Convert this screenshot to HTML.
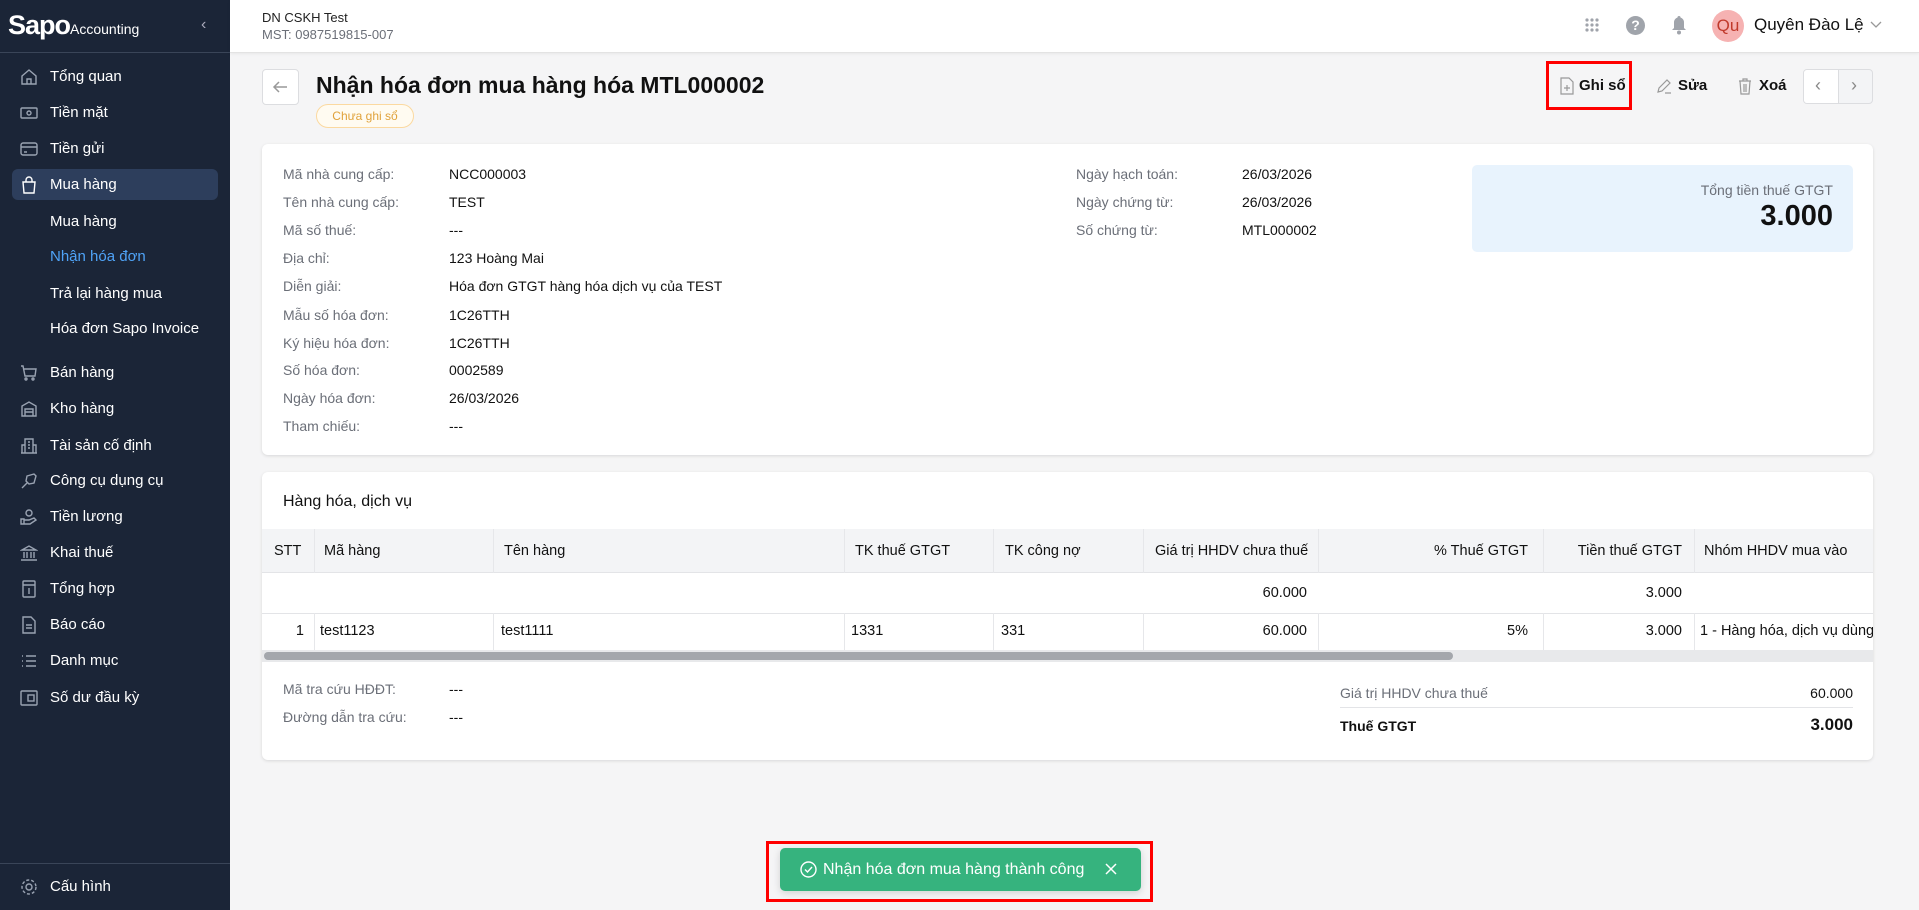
<!DOCTYPE html>
<html><head><meta charset="utf-8">
<style>
*{box-sizing:border-box;margin:0;padding:0}
body{width:1919px;height:910px;overflow:hidden;background:#f5f5f6;font-family:"Liberation Sans","Noto Sans CJK SC",sans-serif;color:#111;position:relative;font-size:14px}
.abs{position:absolute}
#sb{left:0;top:0;width:230px;height:910px;background:#1b2537;color:#fff}
.si{position:absolute;left:50px;font-size:15px;color:#fff;white-space:nowrap}
.ic{position:absolute;left:20px;width:18px;height:18px}
#hdr{left:230px;top:0;width:1689px;height:53px;background:#fff;border-bottom:1px solid #e3e3e3;box-shadow:0 1px 3px rgba(0,0,0,.06)}
.card{background:#fff;border-radius:6px;box-shadow:0 1px 3px rgba(0,0,0,.12)}
.lb{position:absolute;color:#6b6f78;font-size:14px;white-space:nowrap}
.vl{position:absolute;color:#111;font-size:14px;white-space:nowrap}
.th,.td{position:absolute;font-size:14.5px;white-space:nowrap}
.th{font-weight:normal;color:#111}
.vline{position:absolute;width:1px;background:#e6e7ea}
</style></head><body>
<div id="sb" class="abs">
  <div class="abs" style="left:8px;top:10px;font-size:27px;font-weight:700;letter-spacing:-1px;color:#fff">Sapo<span style="font-size:14px;font-weight:400;letter-spacing:0">Accounting</span></div>
  <div class="abs" style="left:201px;top:16px;color:#aab;font-size:16px">‹</div>
  <div class="abs" style="left:0;top:52px;width:230px;height:1px;background:#3a4558"></div>
  <div class="abs" style="left:12px;top:169px;width:206px;height:31px;border-radius:6px;background:#2d3e5c"></div>
  <svg class="ic" style="top:68px" viewBox="0 0 18 18" fill="none" stroke="#9aa3b2" stroke-width="1.4"><path d="M2 8L9 2l7 6v8H2z M7 16v-5h4v5"/></svg>
  <div class="si" style="top:68px">Tổng quan</div>
  <svg class="ic" style="top:104px" viewBox="0 0 18 18" fill="none" stroke="#9aa3b2" stroke-width="1.4"><rect x="1" y="4" width="16" height="10" rx="1"/><circle cx="9" cy="9" r="2"/></svg>
  <div class="si" style="top:104px">Tiền mặt</div>
  <svg class="ic" style="top:140px" viewBox="0 0 18 18" fill="none" stroke="#9aa3b2" stroke-width="1.4"><rect x="1" y="3" width="16" height="12" rx="2"/><path d="M1 7h16M4 12h3"/></svg>
  <div class="si" style="top:140px">Tiền gửi</div>
  <svg class="ic" style="top:176px" viewBox="0 0 18 18" fill="none" stroke="#fff" stroke-width="1.4"><path d="M3 6h12l-1 11H4z M6 6V4a3 3 0 0 1 6 0v2"/></svg>
  <div class="si" style="top:176px">Mua hàng</div>
  <div class="si" style="top:213px">Mua hàng</div>
  <div class="si" style="top:248px;color:#4fa3f7">Nhận hóa đơn</div>
  <div class="si" style="top:285px">Trả lại hàng mua</div>
  <div class="si" style="top:320px">Hóa đơn Sapo Invoice</div>
  <div class="si" style="top:364px">Bán hàng</div>
  <div class="si" style="top:400px">Kho hàng</div>
  <div class="si" style="top:437px">Tài sản cố định</div>
  <div class="si" style="top:472px">Công cụ dụng cụ</div>
  <div class="si" style="top:508px">Tiền lương</div>
  <div class="si" style="top:544px">Khai thuế</div>
  <div class="si" style="top:580px">Tổng hợp</div>
  <div class="si" style="top:616px">Báo cáo</div>
  <div class="si" style="top:652px">Danh mục</div>
  <div class="si" style="top:689px">Số dư đầu kỳ</div>
  <svg class="ic" style="top:364px" viewBox="0 0 18 18" fill="none" stroke="#9aa3b2" stroke-width="1.4"><path d="M1 2h2l2 10h10l1-7H4"/><circle cx="6" cy="15" r="1"/><circle cx="13" cy="15" r="1"/></svg>
  <svg class="ic" style="top:400px" viewBox="0 0 18 18" fill="none" stroke="#9aa3b2" stroke-width="1.4"><path d="M2 16V6l7-4 7 4v10z M5 9h8v7H5z M5 12h8"/></svg>
  <svg class="ic" style="top:437px" viewBox="0 0 18 18" fill="none" stroke="#9aa3b2" stroke-width="1.4"><path d="M5 16V2h8v14 M1 16h16 M2 16V8h3 M13 8h3v8 M8 5h2M8 8h2M8 11h2"/></svg>
  <svg class="ic" style="top:472px" viewBox="0 0 18 18" fill="none" stroke="#9aa3b2" stroke-width="1.4"><path d="M2 16l6-6 M7 4l7-2 2 2-2 7-5 1-3-3z"/></svg>
  <svg class="ic" style="top:508px" viewBox="0 0 18 18" fill="none" stroke="#9aa3b2" stroke-width="1.4"><circle cx="9" cy="5" r="3"/><path d="M1 11h3v5H1z M4 12h5l5-2 2 2-6 4H4"/></svg>
  <svg class="ic" style="top:544px" viewBox="0 0 18 18" fill="none" stroke="#9aa3b2" stroke-width="1.4"><path d="M2 6l7-4 7 4z M4 8v6M7 8v6M11 8v6M14 8v6M1 16h16"/></svg>
  <svg class="ic" style="top:580px" viewBox="0 0 18 18" fill="none" stroke="#9aa3b2" stroke-width="1.4"><rect x="3" y="1" width="12" height="16" rx="1"/><path d="M3 5h12M9 8v6"/></svg>
  <svg class="ic" style="top:616px" viewBox="0 0 18 18" fill="none" stroke="#9aa3b2" stroke-width="1.4"><path d="M3 1h8l4 4v12H3z M6 9h6M6 12h6"/></svg>
  <svg class="ic" style="top:652px" viewBox="0 0 18 18" fill="none" stroke="#9aa3b2" stroke-width="1.4"><path d="M2 4h1M2 9h1M2 14h1M6 4h10M6 9h10M6 14h10"/></svg>
  <svg class="ic" style="top:689px" viewBox="0 0 18 18" fill="none" stroke="#9aa3b2" stroke-width="1.4"><rect x="1" y="2" width="16" height="14" rx="1"/><rect x="8" y="6" width="6" height="6"/></svg>
  <div class="abs" style="left:0;top:863px;width:230px;height:1px;background:#3a4558"></div>
  <svg class="ic" style="top:878px" viewBox="0 0 18 18" fill="none" stroke="#9aa3b2" stroke-width="1.4"><circle cx="9" cy="9" r="3"/><circle cx="9" cy="9" r="7" stroke-dasharray="3 2"/></svg>
  <div class="si" style="top:878px">Cấu hình</div>
</div>

<div id="hdr" class="abs">
  <div class="abs" style="left:32px;top:10px;font-size:13px;color:#222">DN CSKH Test</div>
  <div class="abs" style="left:32px;top:27px;font-size:13px;color:#6b6f78">MST: 0987519815-007</div>
  <svg class="abs" style="left:1354px;top:17px" width="16" height="16" viewBox="0 0 16 16" fill="#a0a4ab"><circle cx="3" cy="3" r="1.6"/><circle cx="8" cy="3" r="1.6"/><circle cx="13" cy="3" r="1.6"/><circle cx="3" cy="8" r="1.6"/><circle cx="8" cy="8" r="1.6"/><circle cx="13" cy="8" r="1.6"/><circle cx="3" cy="13" r="1.6"/><circle cx="8" cy="13" r="1.6"/><circle cx="13" cy="13" r="1.6"/></svg>
  <div class="abs" style="left:1396px;top:16px;width:19px;height:19px;border-radius:50%;background:#a0a4ab;color:#fff;font-size:14px;font-weight:700;text-align:center;line-height:19px">?</div>
  <svg class="abs" style="left:1441px;top:15px" width="16" height="20" viewBox="0 0 16 20" fill="#a0a4ab"><path d="M8 1a1.5 1.5 0 0 1 1.5 1.5A5 5 0 0 1 13 7.5V13l2 2H1l2-2V7.5a5 5 0 0 1 3.5-5A1.5 1.5 0 0 1 8 1z"/><circle cx="8" cy="17.5" r="2"/></svg>
  <div class="abs" style="left:1482px;top:10px;width:32px;height:32px;border-radius:50%;background:#f6b2b2;color:#c0392b;font-size:17px;text-align:center;line-height:32px">Qu</div>
  <div class="abs" style="left:1524px;top:15px;font-size:17px;color:#111">Quyên Đào Lệ</div>
  <svg class="abs" style="left:1640px;top:21px" width="12" height="8" viewBox="0 0 12 8" fill="none" stroke="#999" stroke-width="1.3"><path d="M1 1l5 5 5-5"/></svg>
</div>

<div class="abs" style="left:262px;top:69px;width:37px;height:36px;background:#fff;border:1px solid #dcdde0;border-radius:4px"></div>
<svg class="abs" style="left:272px;top:80px" width="16" height="14" viewBox="0 0 16 14" fill="none" stroke="#999" stroke-width="1.5"><path d="M15 7H2M7 2L2 7l5 5"/></svg>
<div class="abs" style="left:316px;top:72px;font-size:23px;font-weight:600;color:#111">Nhận hóa đơn mua hàng hóa MTL000002</div>
<div class="abs" style="left:316px;top:104px;width:98px;height:24px;border:1px solid #fbd9a0;background:#fffbf1;border-radius:12px;color:#e0a23b;font-size:12px;text-align:center;line-height:22px">Chưa ghi sổ</div>

<div class="abs" style="left:1546px;top:61px;width:86px;height:49px;border:3px solid #f00"></div>
<svg class="abs" style="left:1560px;top:77px" width="14" height="18" viewBox="0 0 14 18" fill="none" stroke="#999" stroke-width="1.2"><path d="M1 1h8l4 4v12H1z M7 8v6M4 11h6"/></svg>
<div class="abs" style="left:1579px;top:77px;font-size:15px;font-weight:600">Ghi sổ</div>
<svg class="abs" style="left:1656px;top:78px" width="16" height="16" viewBox="0 0 16 16" fill="none" stroke="#999" stroke-width="1.2"><path d="M2 14l1-4 8-8 3 3-8 8z M9 15h6"/></svg>
<div class="abs" style="left:1678px;top:77px;font-size:15px;font-weight:600">Sửa</div>
<svg class="abs" style="left:1738px;top:77px" width="14" height="18" viewBox="0 0 14 18" fill="none" stroke="#999" stroke-width="1.2"><path d="M1 4h12M5 4V2h4v2M2 4l1 13h8l1-13M6 7v8M8 7v8"/></svg>
<div class="abs" style="left:1759px;top:77px;font-size:15px;font-weight:600">Xoá</div>
<div class="abs" style="left:1803px;top:69px;width:70px;height:35px;border:1px solid #dcdde0;border-radius:4px;background:#f3f4f6;overflow:hidden"><div style="width:35px;height:35px;background:#fff;border-right:1px solid #dcdde0"></div></div>
<div class="abs" style="left:1815px;top:75px;color:#888;font-size:18px">‹</div>
<div class="abs" style="left:1851px;top:75px;color:#888;font-size:18px">›</div>

<div class="abs card" style="left:262px;top:144px;width:1611px;height:311px"></div>
<div class="lb" style="left:283px;top:166px">Mã nhà cung cấp:</div><div class="vl" style="left:449px;top:166px">NCC000003</div>
<div class="lb" style="left:283px;top:194px">Tên nhà cung cấp:</div><div class="vl" style="left:449px;top:194px">TEST</div>
<div class="lb" style="left:283px;top:222px">Mã số thuế:</div><div class="vl" style="left:449px;top:222px">---</div>
<div class="lb" style="left:283px;top:250px">Địa chỉ:</div><div class="vl" style="left:449px;top:250px">123 Hoàng Mai</div>
<div class="lb" style="left:283px;top:278px">Diễn giải:</div><div class="vl" style="left:449px;top:278px">Hóa đơn GTGT hàng hóa dịch vụ của TEST</div>
<div class="lb" style="left:283px;top:307px">Mẫu số hóa đơn:</div><div class="vl" style="left:449px;top:307px">1C26TTH</div>
<div class="lb" style="left:283px;top:335px">Ký hiệu hóa đơn:</div><div class="vl" style="left:449px;top:335px">1C26TTH</div>
<div class="lb" style="left:283px;top:362px">Số hóa đơn:</div><div class="vl" style="left:449px;top:362px">0002589</div>
<div class="lb" style="left:283px;top:390px">Ngày hóa đơn:</div><div class="vl" style="left:449px;top:390px">26/03/2026</div>
<div class="lb" style="left:283px;top:418px">Tham chiếu:</div><div class="vl" style="left:449px;top:418px">---</div>
<div class="lb" style="left:1076px;top:166px">Ngày hạch toán:</div><div class="vl" style="left:1242px;top:166px">26/03/2026</div>
<div class="lb" style="left:1076px;top:194px">Ngày chứng từ:</div><div class="vl" style="left:1242px;top:194px">26/03/2026</div>
<div class="lb" style="left:1076px;top:222px">Số chứng từ:</div><div class="vl" style="left:1242px;top:222px">MTL000002</div>
<div class="abs" style="left:1472px;top:165px;width:381px;height:87px;background:#e8f3fd;border-radius:5px"></div>
<div class="abs" style="left:1600px;top:182px;width:233px;text-align:right;color:#6b6f78;font-size:14px">Tổng tiền thuế GTGT</div>
<div class="abs" style="left:1600px;top:200px;width:233px;text-align:right;font-size:29px;font-weight:700">3.000</div>

<div class="abs card" style="left:262px;top:472px;width:1611px;height:288px;overflow:hidden">
  <div class="abs" style="left:21px;top:21px;font-size:16px;font-weight:500">Hàng hóa, dịch vụ</div>
  <div class="abs" style="left:0;top:57px;width:1611px;height:44px;background:#f3f4f6;border-bottom:1px solid #e3e4e7"></div>
  <div class="abs" style="left:0;top:141px;width:1611px;height:1px;background:#e3e4e7"></div>
  <div class="abs" style="left:0;top:178px;width:1611px;height:12px;background:#e8e9eb"></div>
  <div class="abs" style="left:2px;top:180px;width:1189px;height:8px;background:#a4a7ac;border-radius:4px"></div>
  <div class="vline" style="left:52px;top:57px;height:44px"></div><div class="vline" style="left:52px;top:141px;height:37px"></div>
  <div class="vline" style="left:231px;top:57px;height:44px"></div><div class="vline" style="left:231px;top:141px;height:37px"></div>
  <div class="vline" style="left:582px;top:57px;height:44px"></div><div class="vline" style="left:582px;top:141px;height:37px"></div>
  <div class="vline" style="left:731px;top:57px;height:44px"></div><div class="vline" style="left:731px;top:141px;height:37px"></div>
  <div class="vline" style="left:881px;top:57px;height:44px"></div><div class="vline" style="left:881px;top:141px;height:37px"></div>
  <div class="vline" style="left:1056px;top:57px;height:44px"></div><div class="vline" style="left:1056px;top:141px;height:37px"></div>
  <div class="vline" style="left:1281px;top:57px;height:44px"></div><div class="vline" style="left:1281px;top:141px;height:37px"></div>
  <div class="vline" style="left:1432px;top:57px;height:44px"></div><div class="vline" style="left:1432px;top:141px;height:37px"></div>
  <div class="th" style="left:12px;top:71px">STT</div>
  <div class="th" style="left:62px;top:71px">Mã hàng</div>
  <div class="th" style="left:242px;top:71px">Tên hàng</div>
  <div class="th" style="left:593px;top:71px">TK thuế GTGT</div>
  <div class="th" style="left:743px;top:71px">TK công nợ</div>
  <div class="th" style="left:893px;top:71px">Giá trị HHDV chưa thuế</div>
  <div class="th" style="left:1060px;top:71px;width:206px;text-align:right">% Thuế GTGT</div>
  <div class="th" style="left:1290px;top:71px;width:130px;text-align:right">Tiền thuế GTGT</div>
  <div class="th" style="left:1442px;top:71px">Nhóm HHDV mua vào</div>
  <div class="td" style="left:880px;top:113px;width:165px;text-align:right">60.000</div>
  <div class="td" style="left:1290px;top:113px;width:130px;text-align:right">3.000</div>
  <div class="td" style="left:10px;top:151px;width:32px;text-align:right">1</div>
  <div class="td" style="left:58px;top:151px">test1123</div>
  <div class="td" style="left:239px;top:151px">test1111</div>
  <div class="td" style="left:589px;top:151px">1331</div>
  <div class="td" style="left:739px;top:151px">331</div>
  <div class="td" style="left:880px;top:151px;width:165px;text-align:right">60.000</div>
  <div class="td" style="left:1060px;top:151px;width:206px;text-align:right">5%</div>
  <div class="td" style="left:1290px;top:151px;width:130px;text-align:right">3.000</div>
  <div class="td" style="left:1438px;top:151px">1 - Hàng hóa, dịch vụ dùng riêng</div>
  <div class="lb" style="left:21px;top:209px">Mã tra cứu HĐĐT:</div><div class="vl" style="left:187px;top:209px">---</div>
  <div class="lb" style="left:21px;top:237px">Đường dẫn tra cứu:</div><div class="vl" style="left:187px;top:237px">---</div>
  <div class="lb" style="left:1078px;top:213px">Giá trị HHDV chưa thuế</div>
  <div class="vl" style="left:1400px;top:213px;width:191px;text-align:right">60.000</div>
  <div class="abs" style="left:1078px;top:235px;width:513px;height:1px;background:#e3e4e7"></div>
  <div class="vl" style="left:1078px;top:246px;font-weight:700">Thuế GTGT</div>
  <div class="vl" style="left:1400px;top:243px;width:191px;text-align:right;font-weight:700;font-size:17px">3.000</div>
</div>

<div class="abs" style="left:766px;top:841px;width:387px;height:61px;border:3px solid #f00"></div>
<div class="abs" style="left:780px;top:848px;width:361px;height:43px;background:#36b37e;border-radius:5px;box-shadow:0 2px 8px rgba(0,0,0,.15)"></div>
<svg class="abs" style="left:800px;top:861px" width="17" height="17" viewBox="0 0 17 17" fill="none" stroke="#fff" stroke-width="1.4"><circle cx="8.5" cy="8.5" r="7.5"/><path d="M5 8.5l2.5 2.5 4.5-5"/></svg>
<div class="abs" style="left:823px;top:861px;color:#fff;font-size:16px">Nhận hóa đơn mua hàng thành công</div>
<svg class="abs" style="left:1105px;top:863px" width="12" height="12" viewBox="0 0 12 12" stroke="#fff" stroke-width="1.5"><path d="M1 1l10 10M11 1L1 11"/></svg>
</body></html>
